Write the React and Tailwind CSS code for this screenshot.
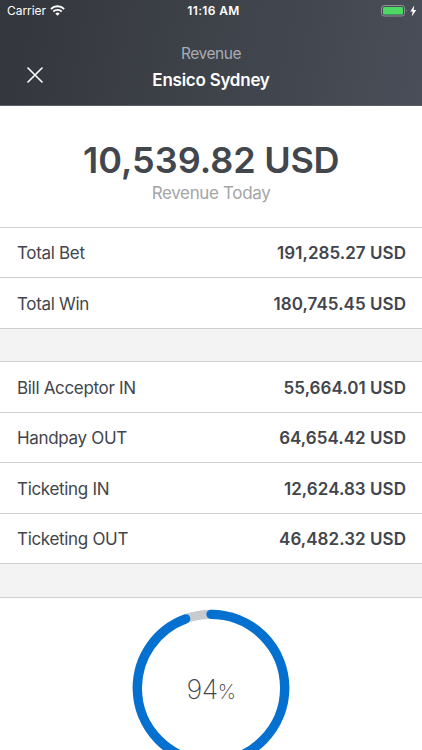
const summary = [
  { label: "Total Bet", value: "191,285.27 USD", h: "h-[50px]" },
  { label: "Total Win", value: "180,745.45 USD", h: "h-[51px]" },
];

const details = [
  { label: "Bill Acceptor IN", value: "55,664.01 USD", h: "h-[51px]" },
  { label: "Handpay OUT", value: "64,654.42 USD", h: "h-[50px]" },
  { label: "Ticketing IN", value: "12,624.83 USD", h: "h-[51px]" },
  { label: "Ticketing OUT", value: "46,482.32 USD", h: "h-[50px]" },
];

function Row({ label, value, h }) {
  return (
    <div className={`flex items-center justify-between border-b border-[#cfcfd1] pl-[17px] pr-[16px] pt-[3px] text-[17px] text-[#42454c] ${h}`}>
      <span className="tracking-[-0.32px]">{label}</span>
      <span className="font-[580] tracking-[0.04px]">{value}</span>
    </div>
  );
}

function StatusBar() {
  return (
    <div className="grid h-[22px] grid-cols-3 items-center text-[12px] leading-none">
      <div className="flex items-center gap-[4px] pl-[7px]">
        <span className="tracking-[-0.05px]">Carrier</span>
        <svg className="-mt-px" width="15" height="11" viewBox="0 0 15 11" fill="none" stroke="white" strokeWidth="1.8">
          <path d="M.9 4a9.3 9.3 0 0 1 13.2 0" />
          <path d="M3.3 6.5a6 6 0 0 1 8.4 0" />
          <path d="M7.5 10.8 5.3 8.6a3.1 3.1 0 0 1 4.4 0z" fill="white" stroke="none" />
        </svg>
      </div>
      <span className="pl-[5px] text-center font-[580] tracking-[0.35px]">11:16 AM</span>
      <div className="flex items-center justify-end pr-[5px]">
        <svg width="36" height="12" viewBox="0 0 36 12">
          <rect x=".5" y=".5" width="23" height="10.5" rx="2.5" fill="none" stroke="#8d9198" />
          <rect x="2" y="2" width="20" height="7.5" rx="1.2" fill="#4cd964" />
          <path d="M25 4q1.5 1.7 0 3.5z" fill="#8d9198" />
          <path d="M33.2.6 29.3 6.5h2.4L30.7 11.4l4.6-6.4h-2.6z" fill="white" />
        </svg>
      </div>
    </div>
  );
}

export default function App() {
  return (
    <div className="flex h-[750px] w-[422px] flex-col overflow-hidden bg-white font-['Inter',sans-serif]">
      <header className="h-[106px] shrink-0 border-b border-[#5b5e64] bg-[linear-gradient(101deg,#33363c_0%,#3d4148_45%,#494e58_100%)] text-white">
        <StatusBar />
        <div className="grid grid-cols-[70px_1fr_70px] pt-[21px]">
          <button className="flex items-center justify-center pt-[14px]" aria-label="Close">
            <svg width="16" height="16" viewBox="0 0 16 16" stroke="white" strokeWidth="1.6" strokeLinecap="round">
              <path d="M1 1l14 14M15 1 1 15" />
            </svg>
          </button>
          <div className="text-center">
            <div className="text-[15.5px] leading-[22px] tracking-[-0.45px] text-[#a9acb2]">Revenue</div>
            <div className="mt-[3px] text-[17px] font-[580] leading-[24px] tracking-[-0.25px]">Ensico Sydney</div>
          </div>
        </div>
      </header>

      <section className="h-[122px] shrink-0 border-b border-[#d3d3d5] pt-[32px] text-center">
        <div className="text-[36px] font-[570] leading-[44px] text-[#42464d]">
          10,539.82<span className="tracking-[-0.4px]"> USD</span>
        </div>
        <div className="mt-px text-[17px] leading-[20px] tracking-[-0.35px] text-[#a5a5a6]">Revenue Today</div>
      </section>

      <section className="shrink-0">{summary.map((r) => <Row key={r.label} {...r} />)}</section>
      <div className="h-[33px] shrink-0 border-b border-[#cfcfd1] bg-[#f3f3f3]" />
      <section className="shrink-0">{details.map((r) => <Row key={r.label} {...r} />)}</section>
      <div className="h-[34px] shrink-0 border-b border-[#cfcfd1] bg-[#f3f3f3]" />

      <section className="flex shrink-0 justify-center pt-[10px]">
        <div className="grid h-[160px] w-[160px] place-items-center">
          <svg className="col-start-1 row-start-1" width="160" height="160" viewBox="0 0 160 160" fill="none" strokeWidth="9.3">
            <circle cx="80" cy="80" r="73.7" stroke="#c8cbcd" />
            <circle
              cx="80"
              cy="80"
              r="73.7"
              stroke="#0471d0"
              strokeLinecap="round"
              pathLength="100"
              strokeDasharray="94.4 100"
              transform="rotate(-90 80 80)"
            />
          </svg>
          <div className="col-start-1 row-start-1 pt-[3px] text-[27px] font-extralight leading-none tracking-[-0.5px] text-[#42454c]">
            94<span className="text-[20.5px]">%</span>
          </div>
        </div>
      </section>
    </div>
  );
}
